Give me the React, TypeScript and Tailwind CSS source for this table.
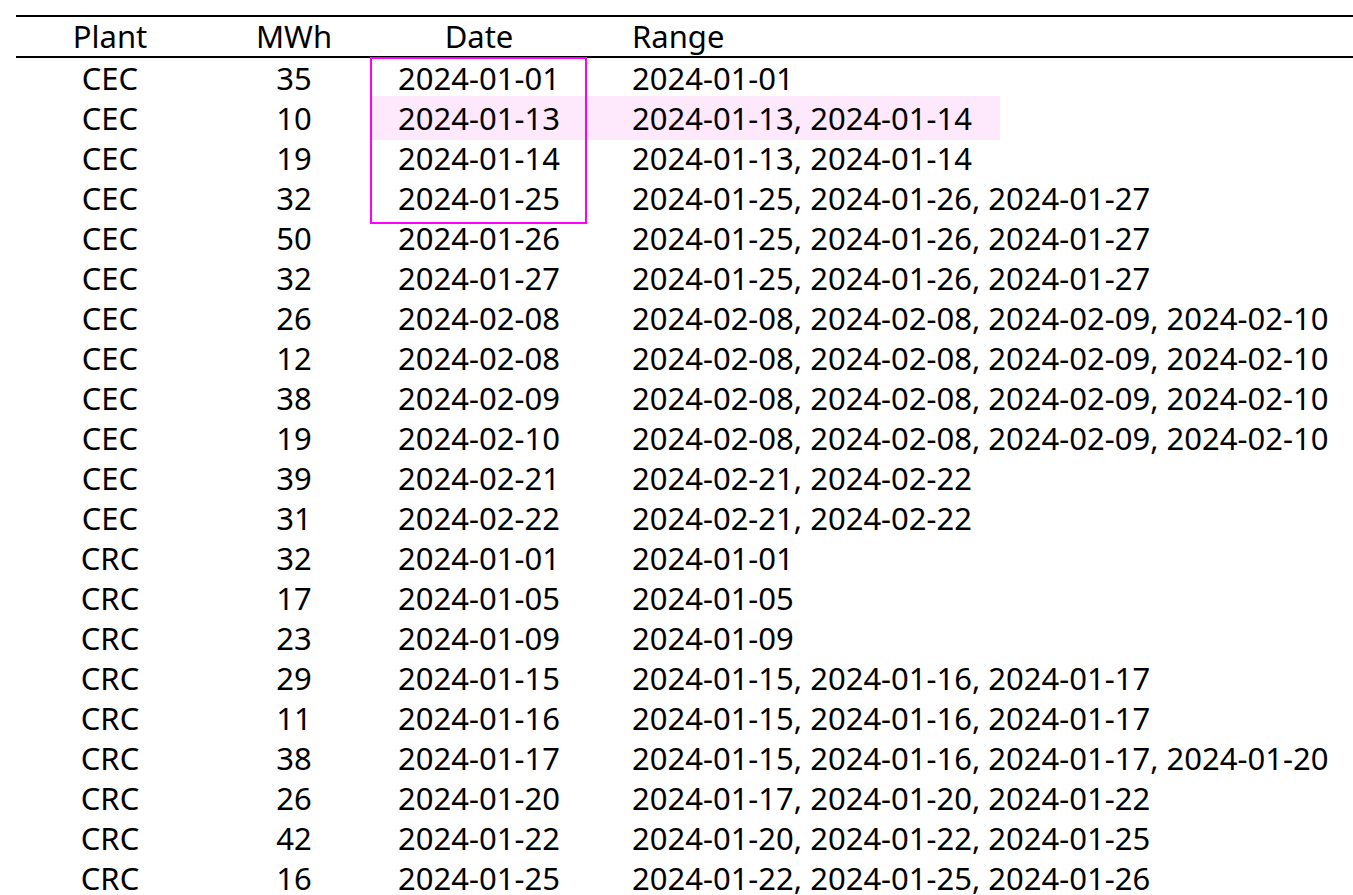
import React from 'react';

const rows: [string, number, string, string][] = [
  ['CEC', 35, '2024-01-01', '2024-01-01'],
  ['CEC', 10, '2024-01-13', '2024-01-13, 2024-01-14'],
  ['CEC', 19, '2024-01-14', '2024-01-13, 2024-01-14'],
  ['CEC', 32, '2024-01-25', '2024-01-25, 2024-01-26, 2024-01-27'],
  ['CEC', 50, '2024-01-26', '2024-01-25, 2024-01-26, 2024-01-27'],
  ['CEC', 32, '2024-01-27', '2024-01-25, 2024-01-26, 2024-01-27'],
  ['CEC', 26, '2024-02-08', '2024-02-08, 2024-02-08, 2024-02-09, 2024-02-10'],
  ['CEC', 12, '2024-02-08', '2024-02-08, 2024-02-08, 2024-02-09, 2024-02-10'],
  ['CEC', 38, '2024-02-09', '2024-02-08, 2024-02-08, 2024-02-09, 2024-02-10'],
  ['CEC', 19, '2024-02-10', '2024-02-08, 2024-02-08, 2024-02-09, 2024-02-10'],
  ['CEC', 39, '2024-02-21', '2024-02-21, 2024-02-22'],
  ['CEC', 31, '2024-02-22', '2024-02-21, 2024-02-22'],
  ['CRC', 32, '2024-01-01', '2024-01-01'],
  ['CRC', 17, '2024-01-05', '2024-01-05'],
  ['CRC', 23, '2024-01-09', '2024-01-09'],
  ['CRC', 29, '2024-01-15', '2024-01-15, 2024-01-16, 2024-01-17'],
  ['CRC', 11, '2024-01-16', '2024-01-15, 2024-01-16, 2024-01-17'],
  ['CRC', 38, '2024-01-17', '2024-01-15, 2024-01-16, 2024-01-17, 2024-01-20'],
  ['CRC', 26, '2024-01-20', '2024-01-17, 2024-01-20, 2024-01-22'],
  ['CRC', 42, '2024-01-22', '2024-01-20, 2024-01-22, 2024-01-25'],
  ['CRC', 16, '2024-01-25', '2024-01-22, 2024-01-25, 2024-01-26'],
];

const cols = 'grid grid-cols-[188px_180px_190px_1fr]';

const App: React.FC = () => {
  return (
    <div
      className="relative h-screen overflow-hidden bg-white text-black"
      style={{ fontFamily: '"Noto Sans", "Open Sans", sans-serif' }}
    >
      {/* row highlight */}
      <div className="absolute left-[372px] top-[96px] w-[628px] h-[44px] bg-[#fde8fc]"></div>

      <div className="relative pt-[15px] pl-[16px] text-[31px] leading-none">
        <div className="border-t-2 border-b-2 border-black">
          <div className={`${cols} h-[39px] items-center`}>
            <div className="text-center">Plant</div>
            <div className="text-center">MWh</div>
            <div className="text-center">Date</div>
            <div className="pl-[58px]">Range</div>
          </div>
        </div>
        {rows.map((r, i) => (
          <div key={i} className={`${cols} h-[40px] items-center whitespace-nowrap`}>
            <div className="text-center">{r[0]}</div>
            <div className="text-center">{r[1]}</div>
            <div className="text-center">{r[2]}</div>
            <div className="pl-[58px]">{r[3]}</div>
          </div>
        ))}
      </div>

      {/* selection box */}
      <div className="absolute left-[370px] top-[57px] w-[217px] h-[167px] border-2 border-[#f0f]"></div>
    </div>
  );
};

export default App;
